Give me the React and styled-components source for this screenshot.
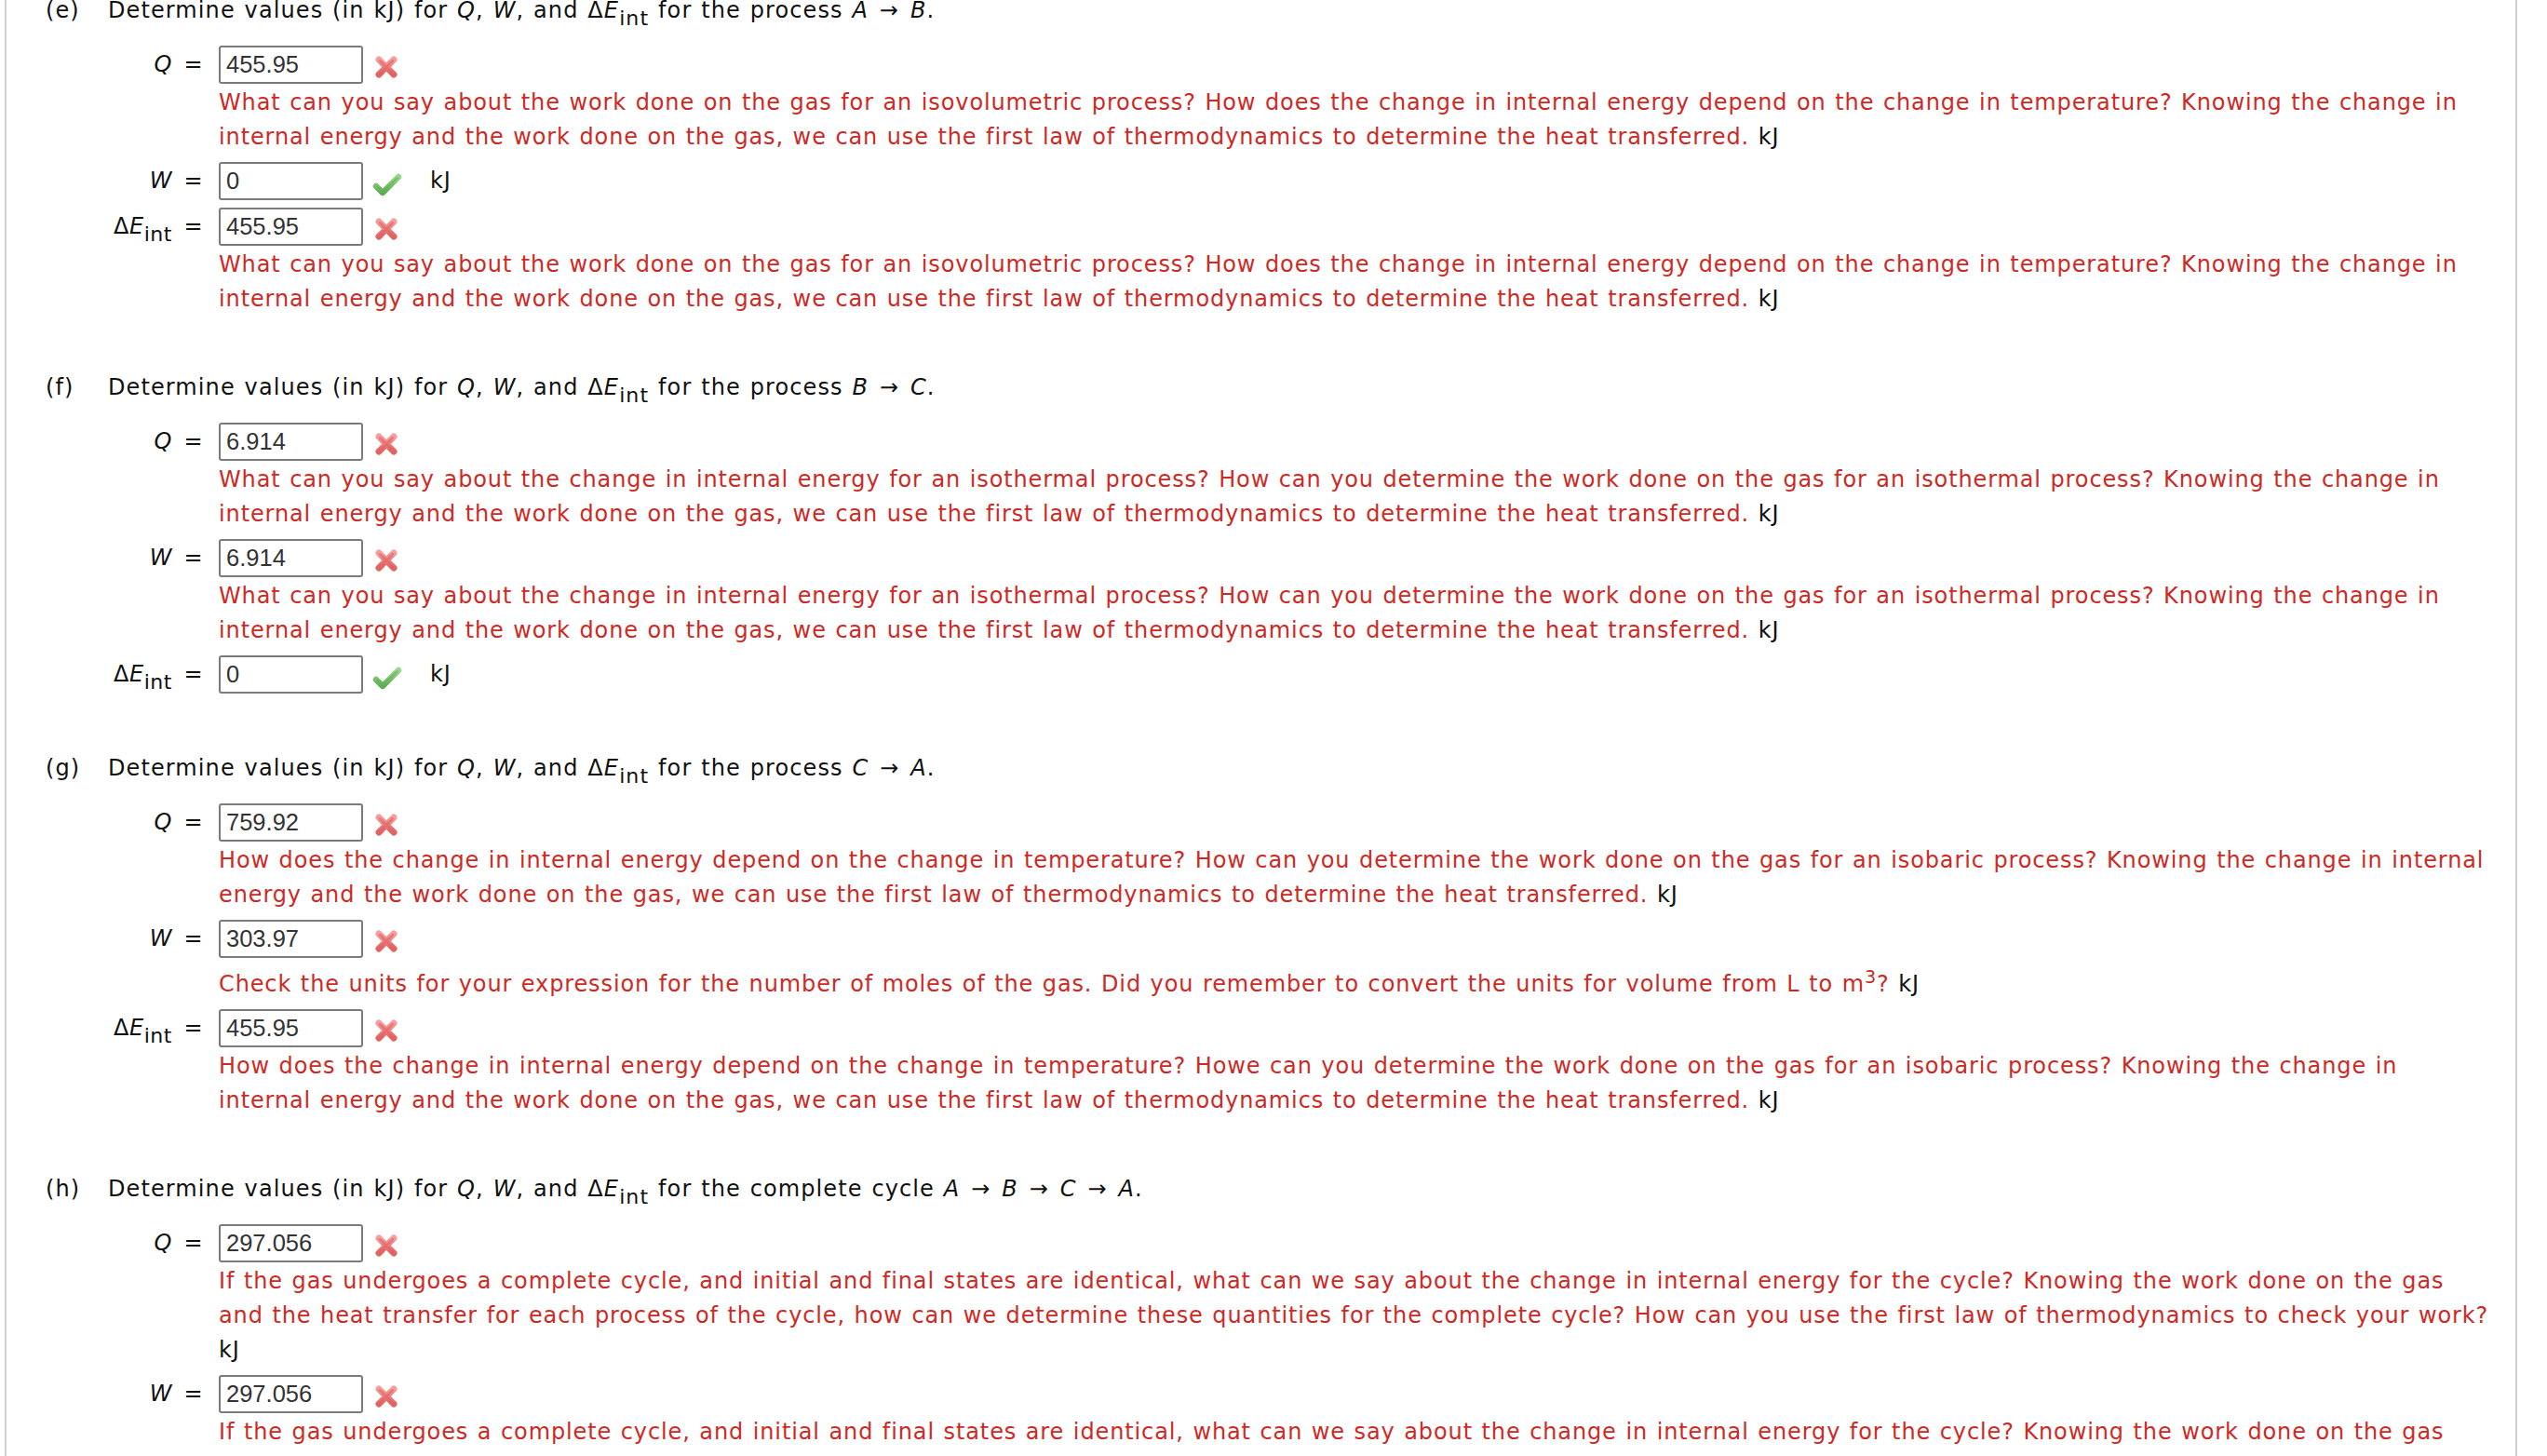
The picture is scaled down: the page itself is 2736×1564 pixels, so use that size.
import React from 'react'
import styled, { createGlobalStyle, css } from 'styled-components'

const GlobalStyle = createGlobalStyle`
  html, body {
    margin: 0;
    padding: 0;
    background: #fff;
    overflow: hidden;
  }
  body {
    font-family: "DejaVu Sans", Verdana, sans-serif;
    color: #111;
  }
`

// DejaVu Sans runs narrower than Verdana, spacing makes up the difference
const Page = styled.div`
  box-sizing: border-box;
  margin: -7px 32px 0 5px;
  min-height: calc(100vh + 7px);
  border-left: 2px solid #cfcfcf;
  border-right: 2px solid #cfcfcf;
  padding-left: 42px;
  font-size: 24px;
  line-height: 37px;
  letter-spacing: 0.88px;
  word-spacing: 1.1px;
`

const Section = styled.div`
  margin-bottom: 57px;
`

const Heading = styled.div`
  display: flex;
  line-height: 37px;
  margin-bottom: 12px;
  white-space: nowrap;
  letter-spacing: 1.1px;
`

const PartNum = styled.span`
  width: 67px;
  flex: none;
`

const Var = styled.i`
  font-style: italic;
`

const Arrow = styled.span`
  display: inline-block;
  padding: 0 2px;
`

const Sub = styled.sub`
  font-size: 0.92em;
  vertical-align: -0.36em;
  line-height: 0;
`

const Row = styled.div`
  display: flex;
  align-items: flex-start;
  padding: 7px 0 1px;
  ${p => p.$plain && css`
    &:last-child {
      padding-bottom: 5px;
    }
  `}
`

const Label = styled.div`
  width: 136px;
  flex: none;
  text-align: right;
  height: 41px;
  line-height: 41px;
  white-space: nowrap;
  letter-spacing: 0.5px;
`

const Eq = styled.div`
  width: 46px;
  padding-right: 4px;
  flex: none;
  text-align: center;
  height: 41px;
  line-height: 41px;
`

const Content = styled.div`
  flex: 1;
  min-width: 0;
`

const InputLine = styled.div`
  display: flex;
  align-items: center;
  height: 41px;
`

const AnswerBox = styled.input`
  box-sizing: border-box;
  width: 155px;
  height: 41px;
  margin: 0;
  border: 2px solid #7b7b7b;
  border-radius: 3px;
  padding: 0 6px;
  background: #fff;
  color: #333;
  font-family: "Liberation Sans", Arial, sans-serif;
  font-size: 25.5px;
  letter-spacing: 0;
  outline: none;
`

const Mark = styled.span`
  display: flex;
  margin-left: ${p => (p.$ok ? '10px' : '12px')};
  margin-top: ${p => (p.$ok ? '7px' : '4px')};
`

const Units = styled.span`
  color: #111;
  margin-left: ${p => p.$gap || 0};
`

const Feedback = styled.div`
  margin-top: 2px;
  color: #cd2a26;
  line-height: 37px;
`

const FbLine = styled.div`
  white-space: nowrap;
`

const Sup = styled.sup`
  font-size: 0.8em;
`

function CrossIcon() {
  return (
    <svg width="26" height="26" viewBox="0 0 26 26">
      <defs>
        <linearGradient id="xgrad" x1="0" y1="0" x2="0" y2="1">
          <stop offset="0" stopColor="#f4a0a0" />
          <stop offset="1" stopColor="#e06464" />
        </linearGradient>
      </defs>
      <path d="M5 5 L21 21 M21 5 L5 21" stroke="url(#xgrad)" strokeWidth="7" strokeLinecap="round" fill="none" />
      <path d="M6 6 L20 20 M20 6 L6 20" stroke="#e25c5c" strokeWidth="2.5" strokeLinecap="round" fill="none" opacity="0.55" />
    </svg>
  )
}

function CheckIcon() {
  return (
    <svg width="32" height="26" viewBox="0 0 32 26">
      <defs>
        <linearGradient id="cgrad" x1="0" y1="0" x2="0" y2="1">
          <stop offset="0" stopColor="#9bd68a" />
          <stop offset="1" stopColor="#5eae50" />
        </linearGradient>
      </defs>
      <path d="M4 15 L11 22 L28 5" stroke="url(#cgrad)" strokeWidth="6.5" strokeLinecap="round" strokeLinejoin="round" fill="none" />
      <path d="M5 15.5 L11 21 L27 6" stroke="#66b357" strokeWidth="2" strokeLinecap="round" strokeLinejoin="round" fill="none" opacity="0.6" />
    </svg>
  )
}

const dEint = (
  <>
    Δ<Var>E</Var><Sub>int</Sub>
  </>
)

const to = <Arrow>→</Arrow>

const isoVol = [
  'What can you say about the work done on the gas for an isovolumetric process? How does the change in internal energy depend on the change in temperature? Knowing the change in',
  'internal energy and the work done on the gas, we can use the first law of thermodynamics to determine the heat transferred.'
]

const isoTherm = [
  'What can you say about the change in internal energy for an isothermal process? How can you determine the work done on the gas for an isothermal process? Knowing the change in',
  'internal energy and the work done on the gas, we can use the first law of thermodynamics to determine the heat transferred.'
]

const cycle = [
  'If the gas undergoes a complete cycle, and initial and final states are identical, what can we say about the change in internal energy for the cycle? Knowing the work done on the gas',
  'and the heat transfer for each process of the cycle, how can we determine these quantities for the complete cycle? How can you use the first law of thermodynamics to check your work?'
]

const parts = [
  {
    num: '(e)',
    tail: <>the process <Var>A</Var> {to} <Var>B</Var>.</>,
    rows: [
      { label: <Var>Q</Var>, value: '455.95', ok: false, lines: isoVol },
      { label: <Var>W</Var>, value: '0', ok: true },
      { label: dEint, value: '455.95', ok: false, lines: isoVol }
    ]
  },
  {
    num: '(f)',
    tail: <>the process <Var>B</Var> {to} <Var>C</Var>.</>,
    rows: [
      { label: <Var>Q</Var>, value: '6.914', ok: false, lines: isoTherm },
      { label: <Var>W</Var>, value: '6.914', ok: false, lines: isoTherm },
      { label: dEint, value: '0', ok: true }
    ]
  },
  {
    num: '(g)',
    tail: <>the process <Var>C</Var> {to} <Var>A</Var>.</>,
    rows: [
      {
        label: <Var>Q</Var>,
        value: '759.92',
        ok: false,
        lines: [
          'How does the change in internal energy depend on the change in temperature? How can you determine the work done on the gas for an isobaric process? Knowing the change in internal',
          'energy and the work done on the gas, we can use the first law of thermodynamics to determine the heat transferred.'
        ]
      },
      {
        label: <Var>W</Var>,
        value: '303.97',
        ok: false,
        lines: [
          <>Check the units for your expression for the number of moles of the gas. Did you remember to convert the units for volume from L to m<Sup>3</Sup>?</>
        ]
      },
      {
        label: dEint,
        value: '455.95',
        ok: false,
        lines: [
          'How does the change in internal energy depend on the change in temperature? Howe can you determine the work done on the gas for an isobaric process? Knowing the change in',
          'internal energy and the work done on the gas, we can use the first law of thermodynamics to determine the heat transferred.'
        ]
      }
    ]
  },
  {
    num: '(h)',
    tail: (
      <>
        the complete cycle <Var>A</Var> {to} <Var>B</Var> {to} <Var>C</Var> {to} <Var>A</Var>.
      </>
    ),
    rows: [
      { label: <Var>Q</Var>, value: '297.056', ok: false, lines: cycle, unitsBelow: true },
      { label: <Var>W</Var>, value: '297.056', ok: false, lines: cycle, unitsBelow: true }
    ]
  }
]

function AnswerRow({ row }) {
  const { label, value, ok, lines, unitsBelow } = row
  return (
    <Row $plain={!lines}>
      <Label>{label}</Label>
      <Eq>=</Eq>
      <Content>
        <InputLine>
          <AnswerBox type="text" value={value} readOnly />
          <Mark $ok={ok}>{ok ? <CheckIcon /> : <CrossIcon />}</Mark>
          {!lines && <Units $gap="30px">kJ</Units>}
        </InputLine>
        {lines && (
          <Feedback>
            {lines.map((line, i) => (
              <FbLine key={i}>
                {line}
                {i === lines.length - 1 && !unitsBelow && <Units> kJ</Units>}
              </FbLine>
            ))}
            {unitsBelow && (
              <FbLine>
                <Units>kJ</Units>
              </FbLine>
            )}
          </Feedback>
        )}
      </Content>
    </Row>
  )
}

export default function App() {
  return (
    <>
      <GlobalStyle />
      <Page>
        {parts.map(part => (
          <Section key={part.num}>
            <Heading>
              <PartNum>{part.num}</PartNum>
              <span>
                Determine values (in kJ) for <Var>Q</Var>, <Var>W</Var>, and {dEint} for {part.tail}
              </span>
            </Heading>
            {part.rows.map((row, i) => (
              <AnswerRow key={i} row={row} />
            ))}
          </Section>
        ))}
      </Page>
    </>
  )
}
